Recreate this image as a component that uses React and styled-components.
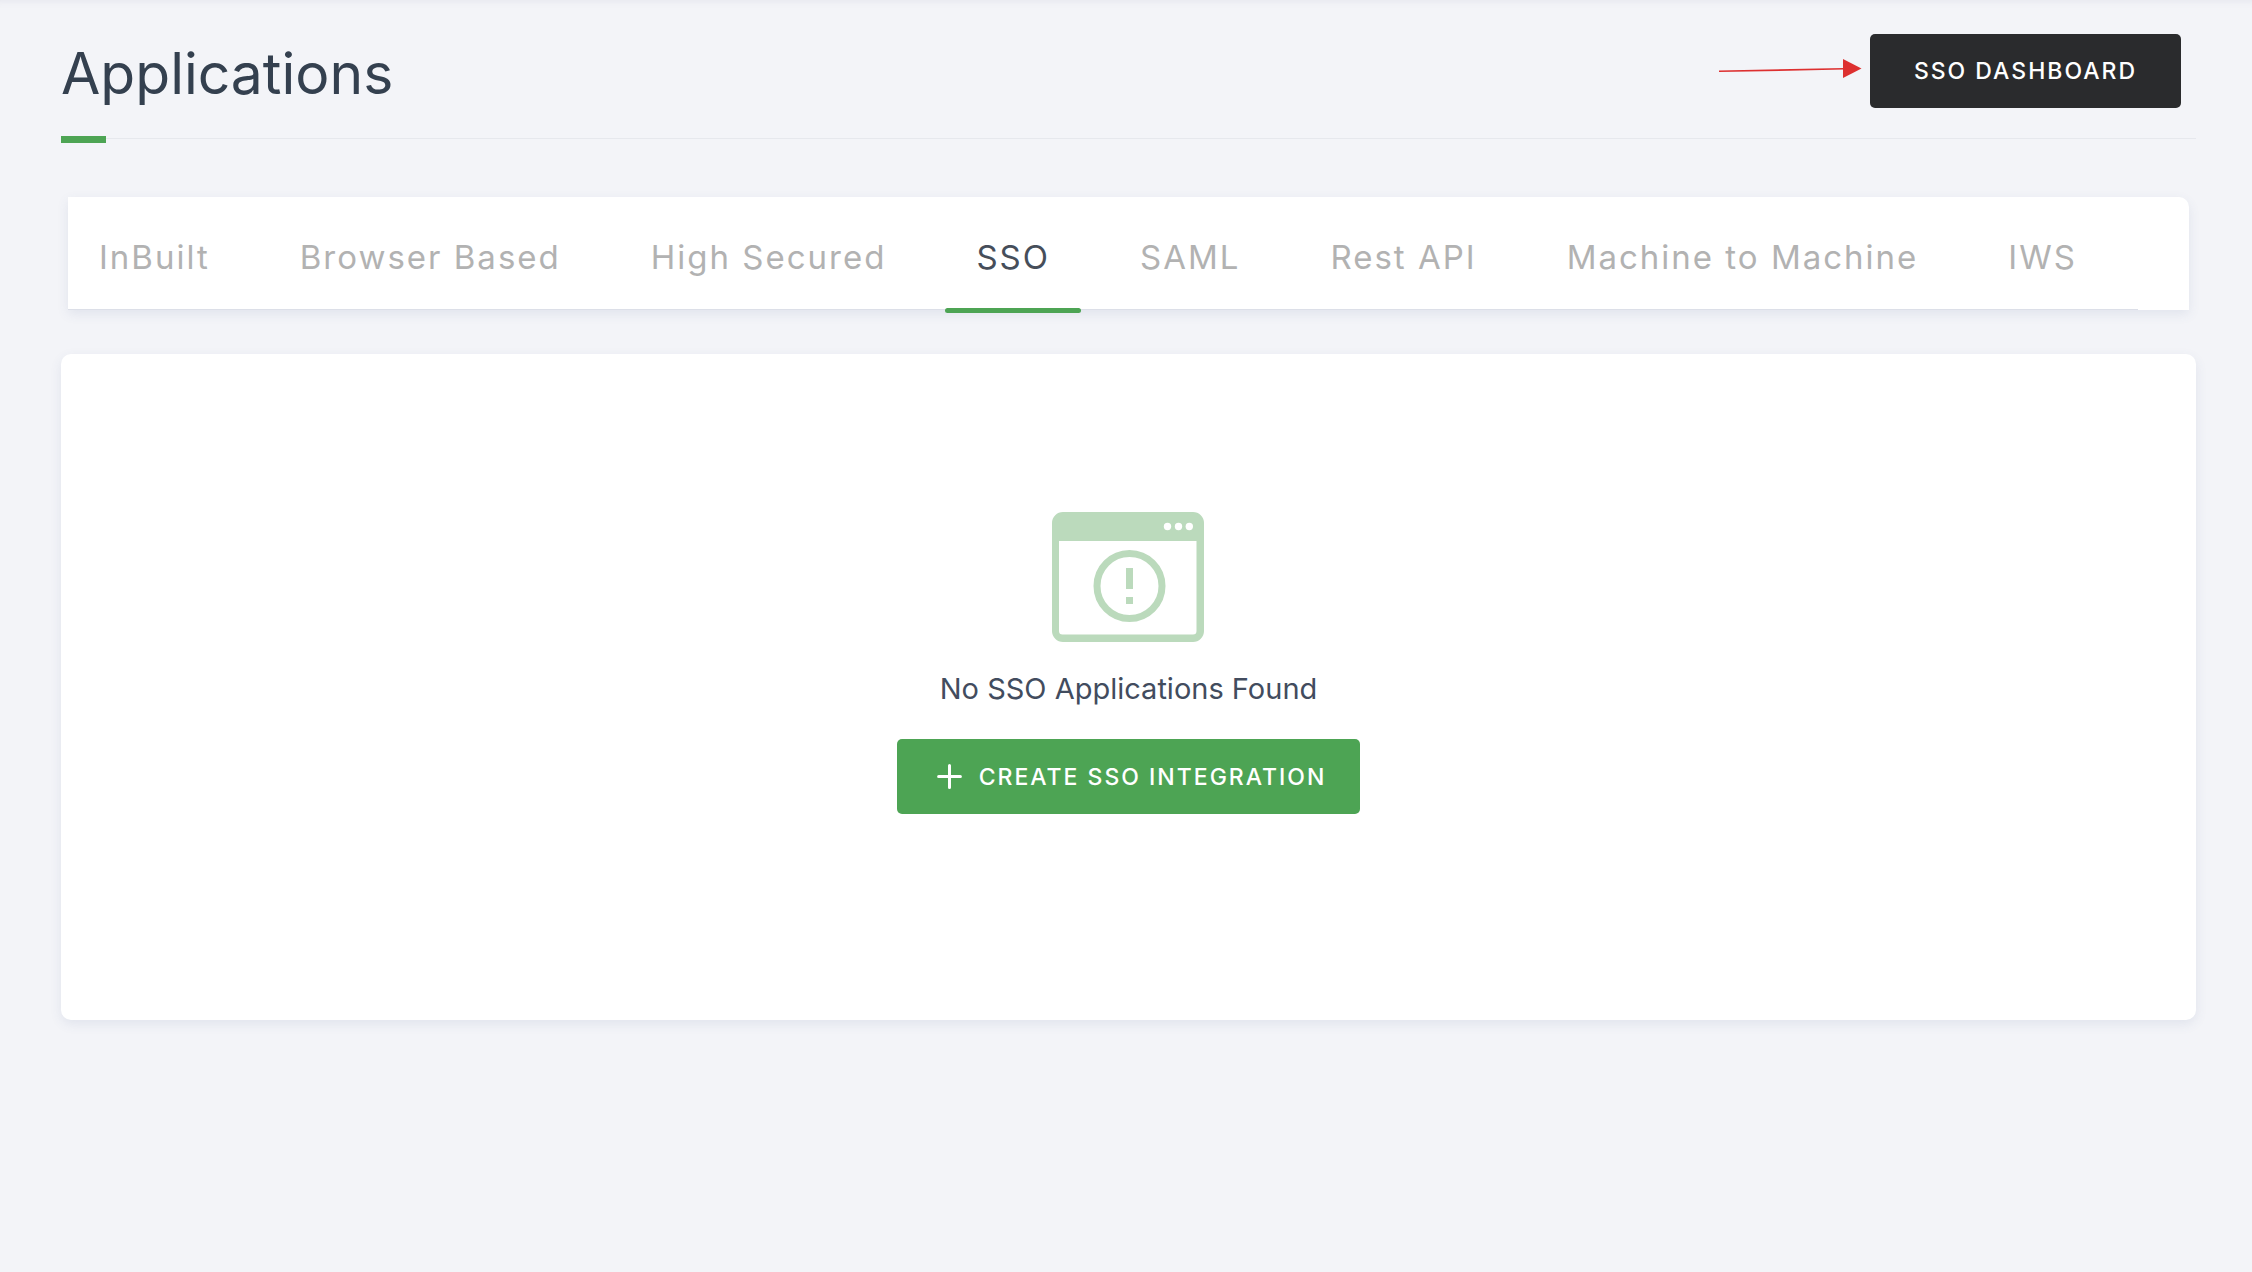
import React, { useState } from "react";
import styled, { createGlobalStyle } from "styled-components";

const GlobalStyle = createGlobalStyle`
  * {
    box-sizing: border-box;
  }

  body {
    margin: 0;
    min-height: 100vh;
    background-color: #f3f4f8;
    font-family: Inter, "Liberation Sans", sans-serif;
  }
`;

const tabList = [
  "InBuilt",
  "Browser Based",
  "High Secured",
  "SSO",
  "SAML",
  "Rest API",
  "Machine to Machine",
  "IWS",
];

const Page = styled.main`
  min-height: 100vh;
  padding: 0 56px 0 61px;
  box-shadow: inset 0 8px 8px -8px rgba(69, 65, 120, 0.1);
`;

const Header = styled.header`
  display: flex;
  justify-content: space-between;
  align-items: center;
  height: 139px;
  padding: 4px 15px 0 0;
  border-bottom: 1px solid #e6e8ed;
`;

const Title = styled.h1`
  margin: 0;
  padding-top: 6px;
  color: #34404f;
  font-size: 57px;
  font-weight: 400;
  line-height: 70px;
`;

const Accent = styled.div`
  width: 45px;
  height: 7px;
  margin-top: -3px;
  background-color: #4da454;
`;

const HeaderActions = styled.div`
  display: flex;
  align-items: center;
  gap: 8px;
`;

const Button = styled.button`
  display: flex;
  justify-content: center;
  align-items: center;
  gap: 17px;
  height: ${({ $primary }) => ($primary ? "75px" : "74px")};
  padding: ${({ $primary }) => ($primary ? "0 34px 0 40px" : "0 44px")};
  border: none;
  border-radius: 5px;
  background-color: ${({ $primary }) => ($primary ? "#4da454" : "#2a2b2d")};
  color: white;
  font-family: inherit;
  font-size: 23px;
  font-weight: 500;
  letter-spacing: 2px;
  text-transform: uppercase;
  white-space: nowrap;
  cursor: pointer;
`;

const TabBar = styled.nav`
  margin: 54px 7px 0;
  padding-right: 51px;
  border-radius: 0 10px 0 0;
  background-color: white;
  box-shadow: 0 4px 12px rgba(69, 90, 140, 0.1);
`;

const TabList = styled.div`
  display: flex;
  gap: 28px;
  height: 113px;
  border-bottom: 1px solid #dcdfe8;
`;

const Tab = styled.button`
  position: relative;
  height: 112px;
  padding: 8px 31px 0;
  border: none;
  background-color: transparent;
  color: ${({ $active }) => ($active ? "#464e5a" : "#b2b2b2")};
  font-family: inherit;
  font-size: 33px;
  font-weight: 400;
  letter-spacing: 2px;
  white-space: nowrap;
  cursor: pointer;

  &::after {
    content: "";
    display: ${({ $active }) => ($active ? "block" : "none")};
    position: absolute;
    left: 0;
    right: 0;
    bottom: -4px;
    height: 5px;
    border-radius: 3px;
    background-color: #4da454;
  }
`;

const Card = styled.section`
  display: flex;
  flex-direction: column;
  align-items: center;
  margin-top: 44px;
  padding: 158px 24px 206px;
  border-radius: 10px;
  background-color: white;
  box-shadow: 0 4px 12px rgba(69, 90, 140, 0.1);
`;

const Message = styled.p`
  margin: 28px 0 32px;
  color: #424c5e;
  font-size: 29px;
  line-height: 37px;
`;

//---------------------- styled

function ArrowIcon() {
  return (
    <svg width="143" height="24" viewBox="0 0 143 24" aria-hidden="true">
      <path d="M0 12.3 125 9.8" stroke="#dd3030" strokeWidth="1.6" />
      <path d="M124 0v19l18.5-9.5z" fill="#dd3030" />
    </svg>
  );
}

function EmptyIcon() {
  return (
    <svg width="154" height="130" viewBox="0 0 154 130" aria-hidden="true">
      <path
        fill="#bbdabc"
        fillRule="evenodd"
        d="M11 0h130a11 11 0 0 1 11 11v108a11 11 0 0 1-11 11H11a11 11 0 0 1-11-11V11A11 11 0 0 1 11 0zM7 29v90q0 3.500 3.500 3.500h130.500q3.500 0 3.500-3.500V29z"
      />
      <circle cx="115.5" cy="14.5" r="3.7" fill="white" />
      <circle cx="126.5" cy="14.5" r="3.7" fill="white" />
      <circle cx="137.3" cy="14.5" r="3.7" fill="white" />
      <circle
        cx="77.5"
        cy="74"
        r="32.5"
        fill="none"
        stroke="#bbdabc"
        strokeWidth="7"
      />
      <path d="M74 56h7v21h-7zM74 85h7v7h-7z" fill="#bbdabc" />
    </svg>
  );
}

function PlusIcon() {
  return (
    <svg width="25" height="25" viewBox="0 0 25 25" aria-hidden="true">
      <path
        d="M12.5 1.6v21.8M1.6 12.5h21.8"
        stroke="white"
        strokeWidth="3"
        strokeLinecap="round"
      />
    </svg>
  );
}

function App() {
  const [activeTab, setActiveTab] = useState("SSO");

  return (
    <>
      <GlobalStyle />

      <Page>
        <Header>
          <Title>Applications</Title>
          <HeaderActions>
            <ArrowIcon />
            <Button type="button">SSO Dashboard</Button>
          </HeaderActions>
        </Header>
        <Accent />
        {/* 헤더 */}

        <TabBar>
          <TabList role="tablist">
            {tabList.map((name) => (
              <Tab
                key={name}
                type="button"
                role="tab"
                aria-selected={name === activeTab}
                $active={name === activeTab}
                onClick={() => setActiveTab(name)}
              >
                {name}
              </Tab>
            ))}
          </TabList>
        </TabBar>
        {/* 탭 메뉴 */}

        <Card>
          <EmptyIcon />
          <Message>No {activeTab} Applications Found</Message>
          <Button type="button" $primary>
            <PlusIcon />
            Create {activeTab} Integration
          </Button>
        </Card>
      </Page>
    </>
  );
}

export default App;
